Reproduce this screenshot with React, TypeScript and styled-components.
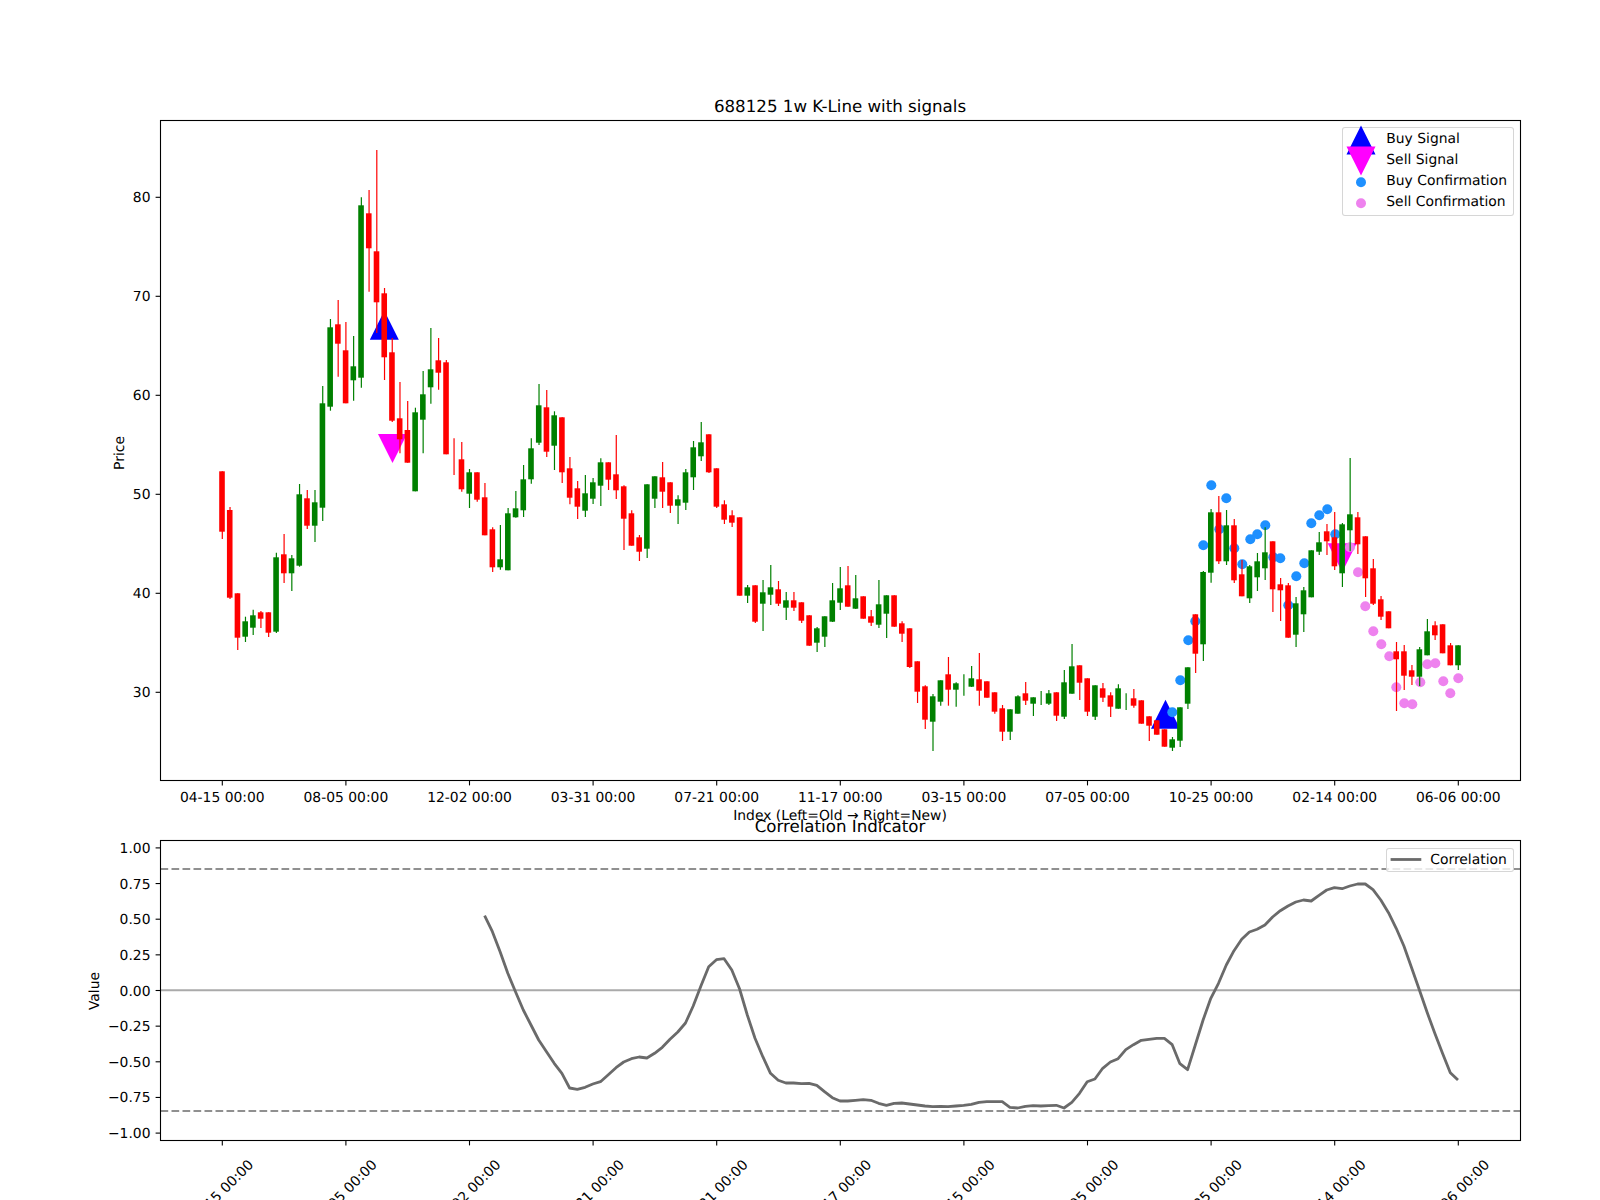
import React from "react";
import styled, { createGlobalStyle } from "styled-components";

const GlobalStyle = createGlobalStyle`
  html, body {
    margin: 0;
    background: #fff;
  }
`;

// [colour, body top, body bottom, wick top, wick bottom] in figure pixels
type Candle = ["r" | "g", number, number, number, number];

const candles: Candle[] = [
  ["r", 471.3, 531.7, 471.3, 539],
  ["r", 510, 597.7, 507, 599],
  ["r", 593.3, 637.7, 593.3, 650],
  ["g", 621.3, 636.7, 616.7, 642],
  ["g", 615.3, 627.7, 609.7, 635],
  ["r", 612.3, 618.7, 611, 628],
  ["r", 612.3, 632.7, 612.3, 637],
  ["g", 557.3, 631.7, 552.7, 633],
  ["r", 554.3, 573.3, 534, 583],
  ["g", 558.3, 573.3, 555, 591],
  ["g", 494.3, 565.7, 484, 566.7],
  ["r", 498.3, 525.7, 490, 529],
  ["g", 502.3, 525.7, 490, 542],
  ["g", 403.3, 507.7, 386, 521],
  ["g", 327.3, 406.7, 319, 410.7],
  ["r", 324.3, 343.7, 300, 376.7],
  ["r", 350.3, 403.3, 322, 403.3],
  ["g", 366.3, 380.3, 336, 400.7],
  ["g", 205.3, 377.7, 197.3, 387.7],
  ["r", 213.3, 248.3, 190, 291.7],
  ["r", 251.3, 302.3, 150, 333],
  ["r", 293.3, 357.3, 288, 380],
  ["r", 352.3, 420.7, 338, 422],
  ["r", 418.3, 439.3, 382, 453.3],
  ["r", 430, 462.7, 401, 462.7],
  ["g", 412.3, 491.3, 407.7, 491.3],
  ["g", 394.3, 419.7, 371, 453.3],
  ["g", 369.3, 387.3, 328, 403.7],
  ["r", 360.3, 372.7, 338, 389.7],
  ["r", 362.3, 454.3, 360, 454.3],
  ["r", 450, 450, 438.3, 475],
  ["r", 459.3, 489.3, 442, 491.7],
  ["g", 472.3, 493.7, 469, 508],
  ["r", 472.3, 499.7, 472.3, 501.7],
  ["r", 497.3, 535.3, 483, 535.3],
  ["r", 529.3, 567.3, 527.3, 572],
  ["g", 559.3, 567.3, 525, 569.7],
  ["g", 513.3, 570.3, 508, 570.3],
  ["g", 508.3, 517.3, 491, 517.7],
  ["g", 479.3, 510.3, 465, 517],
  ["g", 448.3, 479.3, 438.3, 483.7],
  ["g", 405.3, 442.7, 384, 445],
  ["r", 407.3, 451.7, 390, 457],
  ["g", 415.3, 445.7, 411.3, 470],
  ["r", 417.3, 472.3, 417.3, 483],
  ["r", 468.3, 497.7, 457, 504.3],
  ["r", 488.3, 506.7, 481, 519],
  ["g", 493.3, 510.7, 475, 517],
  ["g", 482.3, 498.7, 478, 504],
  ["g", 462.3, 485.7, 458.3, 506],
  ["r", 462.3, 479.7, 462.3, 490],
  ["r", 474.3, 490.3, 435, 499],
  ["r", 486.3, 518.7, 485.3, 550],
  ["r", 513.3, 545.7, 510.3, 545.7],
  ["r", 537.3, 551.7, 535, 561],
  ["g", 484.3, 548.7, 484.3, 558],
  ["g", 476.3, 498.7, 476.3, 508],
  ["r", 477.3, 491.7, 462, 508],
  ["r", 482.3, 505.7, 482.3, 513],
  ["g", 499.3, 505.7, 495.3, 524],
  ["g", 472.3, 502.7, 469, 510],
  ["g", 447.3, 477.3, 441, 490],
  ["g", 442.3, 456.3, 422, 461],
  ["r", 434.3, 472.3, 434.3, 473],
  ["r", 468.3, 506.7, 468.3, 508],
  ["r", 504.3, 519.7, 500.3, 524],
  ["r", 515.3, 522.7, 510.3, 527],
  ["r", 517.3, 595.7, 517.3, 595.7],
  ["g", 587.3, 595.7, 585, 603],
  ["r", 585.3, 621.7, 585.3, 623],
  ["g", 592.3, 603.7, 580, 631],
  ["g", 587.3, 594.7, 565, 605],
  ["r", 589.3, 603.7, 581, 606],
  ["g", 600.3, 607.7, 592, 620],
  ["r", 600.3, 607.7, 592, 611],
  ["r", 602.3, 620.7, 602.3, 623],
  ["r", 615.3, 645.7, 615.3, 645.7],
  ["g", 628.3, 642.7, 627, 652],
  ["g", 616.3, 636.7, 616.3, 647],
  ["g", 600.3, 621.7, 583, 622],
  ["g", 588.3, 602.7, 567, 610],
  ["r", 585.3, 606.7, 566, 606.7],
  ["g", 598.3, 608.7, 575, 609],
  ["r", 596.3, 618.7, 596.3, 618.7],
  ["r", 616.3, 622.7, 610, 626],
  ["g", 604.3, 624.7, 580, 628],
  ["g", 595.3, 613.7, 595.3, 638],
  ["r", 595.3, 626.7, 595.3, 626.7],
  ["r", 623.3, 633.7, 621.3, 642],
  ["r", 628.3, 667, 628.3, 668],
  ["r", 661.3, 691.7, 661.3, 703],
  ["r", 686.3, 719.7, 685.3, 729],
  ["g", 696.3, 721.7, 694, 751],
  ["g", 680.3, 701.7, 680.3, 705.7],
  ["r", 674.3, 689.7, 657, 705.7],
  ["g", 683.3, 689.7, 682.3, 706.7],
  ["g", 685, 685, 674.3, 695.7],
  ["g", 678.3, 686.7, 666, 687],
  ["r", 679.3, 690.7, 653, 705.7],
  ["r", 681.3, 697.7, 681.3, 697.7],
  ["r", 692.3, 711.7, 692.3, 713.7],
  ["r", 708.3, 731.7, 705, 741],
  ["g", 709.3, 731.7, 709.3, 740],
  ["g", 696.3, 713.7, 695.3, 713.7],
  ["r", 693.3, 700.7, 682, 705],
  ["g", 697.3, 703.7, 697.3, 716],
  ["g", 698, 698, 691, 705],
  ["g", 693.3, 703.7, 690, 705],
  ["r", 692.3, 715.7, 692.3, 721],
  ["g", 682.3, 716.7, 670, 719],
  ["g", 666.3, 693.7, 644, 693.7],
  ["r", 665.3, 682.7, 665.3, 700],
  ["r", 678.3, 711.7, 678.3, 716],
  ["g", 685.3, 716.7, 685.3, 720],
  ["r", 688.3, 697.7, 683, 702],
  ["r", 695.3, 706.7, 692.3, 717],
  ["g", 688.3, 708.7, 684.3, 708.7],
  ["g", 700, 700, 693.3, 710],
  ["r", 698.3, 705.7, 689, 707.7],
  ["r", 700.3, 723.7, 700.3, 723.7],
  ["r", 716.3, 725.7, 716.3, 741],
  ["r", 720.3, 734.7, 720.3, 734.7],
  ["r", 729.3, 746.7, 729.3, 746.7],
  ["g", 739.3, 747.7, 737, 751],
  ["g", 707.3, 740.7, 707.3, 747],
  ["g", 667.3, 703.7, 667.3, 709],
  ["r", 614.3, 653.7, 614.3, 673],
  ["g", 572, 644.3, 571, 661],
  ["g", 512.3, 572.7, 509, 582.7],
  ["r", 512.3, 561.3, 496, 564],
  ["g", 525.3, 561.3, 510, 565],
  ["r", 525.3, 580.3, 519, 583],
  ["r", 574.3, 596.3, 560, 596.3],
  ["g", 566.3, 598.3, 565, 603],
  ["g", 561.3, 577.3, 553, 591],
  ["g", 552.3, 568.3, 527.3, 580],
  ["r", 541.3, 589.3, 541.3, 612],
  ["r", 584.3, 590.3, 578, 621],
  ["r", 585.3, 637.7, 583, 637.7],
  ["g", 603.3, 634.7, 597, 647],
  ["g", 590.3, 614.3, 587, 632],
  ["g", 550.3, 597.3, 550.3, 597.3],
  ["g", 542.3, 551.7, 532, 555],
  ["r", 531.3, 541.3, 524, 555],
  ["r", 537.3, 566.3, 512, 570],
  ["g", 524.3, 573.3, 523, 587],
  ["g", 514.3, 530.3, 458, 551.3],
  ["r", 517.3, 544.3, 512, 554],
  ["r", 536.3, 578.3, 536.3, 597],
  ["r", 568.3, 603.7, 559, 605],
  ["r", 599.3, 616.7, 596, 620],
  ["r", 611.3, 628.3, 611.3, 628.3],
  ["r", 651.3, 659.3, 642, 711],
  ["r", 651.3, 675.7, 645, 690],
  ["r", 670.3, 676.7, 665, 685],
  ["g", 649.3, 676.7, 647, 686],
  ["g", 631.3, 655.3, 619, 655.3],
  ["r", 625.3, 635.3, 621.3, 640],
  ["r", 624.3, 653.3, 624.3, 653.3],
  ["r", 645.3, 665.3, 643, 665.3],
  ["g", 645.3, 665.3, 645.3, 670],
];

const buyDots = [
  [1172.3, 712.3], [1180.3, 680.3], [1188.3, 640.3], [1195.3, 621.3], [1203.3, 545.3], [1211.3, 485.3],
  [1219.3, 529.3], [1226.3, 498.3], [1234.3, 548.3], [1242.3, 564.3], [1250.3, 539.3], [1257.3, 534.3],
  [1265.3, 525.3], [1273.3, 557.3], [1280.3, 558.3], [1288.3, 605.3], [1296.3, 576.3], [1304.3, 563.3],
  [1311.3, 523.3], [1319.3, 515.3], [1327.3, 509.3], [1335.3, 534.3],
];

const sellDots = [
  [1350, 547.3], [1358, 572.3], [1365.3, 606.3], [1373.3, 631.3], [1381.3, 644.3], [1389.3, 656.3],
  [1396.3, 687.3], [1404.3, 703.3], [1412.3, 704.3], [1420.3, 682.3], [1427.3, 664.3], [1435.3, 663.3],
  [1443.3, 681.3], [1450.3, 693.3], [1458.3, 678.3],
];

// correlation value per candle, starting at index 34
const correlation = [
  915.7, 931.7, 951.7, 973.3, 991.7, 1010, 1025, 1040, 1051.7, 1063.3, 1073.3, 1088, 1089.3, 1087.3, 1084, 1081.7,
  1074.7, 1067.7, 1062, 1058.7, 1057, 1058, 1053.3, 1047.3, 1039.3, 1032, 1023, 1006, 985.7, 966.7, 959.7, 958.7,
  970, 989, 1015, 1038.3, 1056.7, 1073.3, 1080.3, 1083, 1083, 1083.7, 1083.3, 1085.3, 1091.7, 1097.7, 1101, 1101,
  1100.3, 1099.7, 1100.3, 1103.3, 1105.3, 1103.3, 1103, 1104, 1105, 1106, 1106.7, 1106.3, 1106.7, 1106, 1105.3,
  1104.3, 1102.3, 1101.7, 1101.7, 1101.7, 1107.3, 1108, 1106.3, 1105.7, 1106, 1105.7, 1105.3, 1108, 1102.3, 1093.3,
  1081.7, 1079, 1068.3, 1062, 1058.7, 1049.7, 1044.7, 1040.3, 1039.3, 1038.3, 1038.3, 1044.7, 1063.7, 1069.7, 1045,
  1020, 998.3, 983.3, 965, 950.7, 939.3, 932, 929.3, 925, 917, 910.7, 906, 902, 900, 901, 895.3, 890, 887.7, 888.7,
  886, 884, 884, 889.7, 900, 912.7, 928.3, 946, 967.7, 990, 1012.3, 1033.3, 1053.3, 1072.7, 1080,
];

const dates = [
  "04-15 00:00", "08-05 00:00", "12-02 00:00", "03-31 00:00", "07-21 00:00", "11-17 00:00",
  "03-15 00:00", "07-05 00:00", "10-25 00:00", "02-14 00:00", "06-06 00:00",
];

const priceTicks = [80, 70, 60, 50, 40, 30];
const valueTicks = [1, 0.75, 0.5, 0.25, 0, -0.25, -0.5, -0.75, -1];

const candleX = (i: number) => 222 + 7.725 * i;
const dateX = (i: number) => 222.3 + 123.6 * i;
const priceY = (p: number) => 692.3 - (p - 30) * 9.9;
const valueY = (v: number) => 990.5 - 142.6 * v;
const formatValue = (v: number) => (v < 0 ? "\u2212" : "") + Math.abs(v).toFixed(2);

const corrPoints = correlation.map((y, i) => `${candleX(i + 34).toFixed(1)},${y}`).join(" ");

const triangle = (x: number, y: number, up: boolean) =>
  up ? `${x},${y} ${x + 14.5},${y + 29} ${x - 14.5},${y + 29}` : `${x - 14.5},${y} ${x + 14.5},${y} ${x},${y + 29}`;

const Figure = styled.div`
  display: flex;
  flex-direction: column;
  width: 1600px;
  height: 1200px;
  overflow: hidden;
  background: #fff;
  font-family: "DejaVu Sans", sans-serif;
  text-rendering: geometricPrecision;
`;

const Panel = styled.div<{ $height: number }>`
  position: relative;
  width: 1600px;
  height: ${(p) => p.$height}px;
  flex: none;
`;

const Plot = styled.svg`
  display: block;
  width: 100%;
  height: 100%;
  overflow: visible;
`;

const Frame = styled.rect`
  fill: none;
  stroke: #000;
  stroke-width: 1.1;
`;

const Tick = styled.line`
  stroke: #000;
  stroke-width: 1.1;
`;

const Label = styled.text<{ $anchor?: string }>`
  font-family: "DejaVu Sans", sans-serif;
  font-size: 13.89px;
  fill: #000;
  text-anchor: ${(p) => p.$anchor ?? "middle"};
`;

const Title = styled.text`
  font-family: "DejaVu Sans", sans-serif;
  font-size: 16.67px;
  fill: #000;
  text-anchor: middle;
`;

const Wick = styled.line<{ $up: boolean }>`
  stroke: ${(p) => (p.$up ? "#008000" : "#ff0000")};
  stroke-width: 1.2;
`;

const Body = styled.rect<{ $up: boolean }>`
  fill: ${(p) => (p.$up ? "#008000" : "#ff0000")};
`;

const Marker = styled.polygon<{ $color: string }>`
  fill: ${(p) => p.$color};
`;

const Dot = styled.circle<{ $color: string }>`
  fill: ${(p) => p.$color};
`;

const RefLine = styled.line<{ $dashed?: boolean }>`
  stroke: ${(p) => (p.$dashed ? "#909090" : "#aaaaaa")};
  stroke-width: 2.08;
  stroke-dasharray: ${(p) => (p.$dashed ? "7.7 3.3" : "none")};
`;

const CorrLine = styled.polyline`
  fill: none;
  stroke: #6a6a6a;
  stroke-width: 2.8;
  stroke-linejoin: round;
`;

const Legend = styled.div<{ $top: number; $left: number; $width: number; $height: number }>`
  position: absolute;
  box-sizing: border-box;
  top: ${(p) => p.$top}px;
  left: ${(p) => p.$left}px;
  width: ${(p) => p.$width}px;
  height: ${(p) => p.$height}px;
  display: flex;
  flex-direction: column;
  background: rgba(255, 255, 255, 0.8);
  border: 1.1px solid rgba(204, 204, 204, 0.8);
  border-radius: 3px;
  font-size: 13.89px;
  color: #000;
`;

const LegendRow = styled.div<{ $indent: number; $height: number }>`
  display: flex;
  align-items: center;
  height: ${(p) => p.$height}px;
  flex: none;
  white-space: nowrap;
  & > svg {
    width: ${(p) => p.$indent}px;
    height: ${(p) => p.$height}px;
    flex: none;
    overflow: visible;
  }
`;

const LegendLine = styled.line`
  stroke: #6a6a6a;
  stroke-width: 2.8;
`;

const topLegend = [
  { label: "Buy Signal", shape: <Marker $color="#0000ff" points={triangle(18, -2.4, true)} /> },
  { label: "Sell Signal", shape: <Marker $color="#ff00ff" points={triangle(18, -2.4, false)} /> },
  { label: "Buy Confirmation", shape: <Dot $color="#1e90ff" cx={18} cy={12.2} r={5} /> },
  { label: "Sell Confirmation", shape: <Dot $color="#ee82ee" cx={18} cy={12.2} r={5} /> },
];

const PriceChart = () => (
  <Panel $height={820}>
    <Plot viewBox="0 0 1600 820">
      <Title x={840} y={112}>688125 1w K-Line with signals</Title>
      <Marker $color="#0000ff" points={triangle(384.3, 310.7, true)} />
      <Marker $color="#ff00ff" points={triangle(392.5, 434, false)} />
      <Marker $color="#0000ff" points={triangle(1165.5, 699.7, true)} />
      <Marker $color="#ff00ff" points={triangle(1342.2, 543.3, false)} />
      {buyDots.map(([x, y], i) => (
        <Dot key={i} $color="#1e90ff" cx={x} cy={y} r={5} />
      ))}
      {sellDots.map(([x, y], i) => (
        <Dot key={i} $color="#ee82ee" cx={x} cy={y} r={5} />
      ))}
      {candles.map(([c, top, bottom, wickTop, wickBottom], i) => (
        <g key={i}>
          <Wick $up={c === "g"} x1={candleX(i) + 0.3} x2={candleX(i) + 0.3} y1={wickTop} y2={wickBottom} />
          {bottom > top && <Body $up={c === "g"} x={candleX(i) - 2.8} y={top} width={5.6} height={bottom - top} />}
        </g>
      ))}
      <Frame x={160.5} y={120.5} width={1360} height={660} />
      {priceTicks.map((p) => (
        <g key={p}>
          <Tick x1={155.6} x2={160.5} y1={priceY(p)} y2={priceY(p)} />
          <Label $anchor="end" x={150.5} y={priceY(p) + 5}>{p}</Label>
        </g>
      ))}
      {dates.map((d, i) => (
        <g key={d}>
          <Tick x1={dateX(i)} x2={dateX(i)} y1={780.5} y2={785.4} />
          <Label x={dateX(i)} y={802}>{d}</Label>
        </g>
      ))}
      <Label x={840} y={820}>Index (Left=Old → Right=New)</Label>
      <Label transform="translate(124 453) rotate(-90)">Price</Label>
    </Plot>
    <Legend $top={127.3} $left={1342.3} $width={172} $height={88.4}>
      {topLegend.map((row) => (
        <LegendRow key={row.label} $indent={43} $height={21}>
          <svg viewBox="0 0 43 21">{row.shape}</svg>
          <span>{row.label}</span>
        </LegendRow>
      ))}
    </Legend>
  </Panel>
);

const CorrelationChart = () => (
  <Panel $height={380}>
    <Plot viewBox="0 820 1600 380">
      <Title x={840} y={832}>Correlation Indicator</Title>
      <RefLine $dashed x1={160.5} x2={1520.5} y1={869} y2={869} />
      <RefLine $dashed x1={160.5} x2={1520.5} y1={1111} y2={1111} />
      <RefLine x1={160.5} x2={1520.5} y1={990.2} y2={990.2} />
      <CorrLine points={corrPoints} />
      <Frame x={160.5} y={840.5} width={1360} height={300} />
      {valueTicks.map((v) => (
        <g key={v}>
          <Tick x1={155.6} x2={160.5} y1={valueY(v)} y2={valueY(v)} />
          <Label $anchor="end" x={150.5} y={valueY(v) + 5}>{formatValue(v)}</Label>
        </g>
      ))}
      {dates.map((d, i) => (
        <g key={d}>
          <Tick x1={dateX(i)} x2={dateX(i)} y1={1140.5} y2={1145.4} />
          <Label transform={`translate(${dateX(i) + 2} 1195.5) rotate(-45)`}>{d}</Label>
        </g>
      ))}
      <Label transform="translate(99 991) rotate(-90)">Value</Label>
    </Plot>
    <Legend $top={27.7} $left={1386.3} $width={127.5} $height={24.6}>
      <LegendRow $indent={43} $height={22.4}>
        <svg viewBox="0 0 43 22.4">
          <LegendLine x1={3.6} x2={34.3} y1={10.5} y2={10.5} />
        </svg>
        <span>Correlation</span>
      </LegendRow>
    </Legend>
  </Panel>
);

export default function App() {
  return (
    <>
      <GlobalStyle />
      <Figure>
        <PriceChart />
        <CorrelationChart />
      </Figure>
    </>
  );
}
